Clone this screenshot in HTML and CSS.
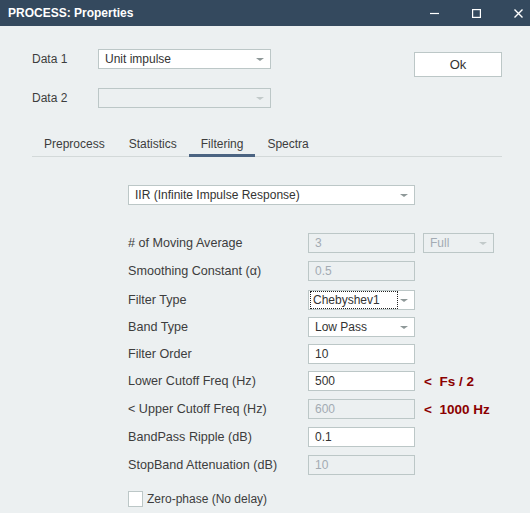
FILE: index.html
```html
<!DOCTYPE html>
<html>
<head>
<meta charset="utf-8">
<link rel="stylesheet" href="styles.css">
</head>
<body>
<div class="window">
  <div class="titlebar">
    <div class="title">PROCESS: Properties</div>
    <div class="controls">
      <svg class="ctl" width="9" height="9" viewBox="0 0 9 9"><path d="M0 4.5h9" stroke="#fff" stroke-width="1.2"/></svg>
      <svg class="ctl" width="9" height="9" viewBox="0 0 9 9"><rect x="0.6" y="0.6" width="7.8" height="7.8" fill="none" stroke="#fff" stroke-width="1.2"/></svg>
      <svg class="ctl" width="9" height="9" viewBox="0 0 9 9"><path d="M0.5 0.5l8 8M8.5 0.5l-8 8" stroke="#fff" stroke-width="1.4"/></svg>
    </div>
  </div>

  <div class="content">
    <div class="top">
      <div class="data">
        <div class="data-row">
          <span class="data-label">Data 1</span>
          <div class="box select data-select"><span class="val">Unit impulse</span><span class="arrow"></span></div>
        </div>
        <div class="data-row second">
          <span class="data-label">Data 2</span>
          <div class="box select data-select disabled"><span class="val"></span><span class="arrow"></span></div>
        </div>
      </div>
      <button class="ok">Ok</button>
    </div>

    <div class="tabs">
      <span class="tab">Preprocess</span>
      <span class="tab">Statistics</span>
      <span class="tab active">Filtering</span>
      <span class="tab">Spectra</span>
    </div>

    <div class="filter">
      <div class="box select iir"><span class="val">IIR (Infinite Impulse Response)</span><span class="arrow"></span></div>

      <div class="rows">
        <div class="row first">
          <span class="label">#&nbsp;of Moving Average</span>
          <div class="box input disabled">3</div>
          <div class="box select full disabled"><span class="val">Full</span><span class="arrow"></span></div>
        </div>
        <div class="row">
          <span class="label">Smoothing Constant (α)</span>
          <div class="box input disabled">0.5</div>
        </div>
        <div class="row g9">
          <span class="label">Filter Type</span>
          <div class="box select input"><span class="val focus">Chebyshev1</span><span class="arrow"></span></div>
        </div>
        <div class="row g7">
          <span class="label">Band Type</span>
          <div class="box select input"><span class="val">Low Pass</span><span class="arrow"></span></div>
        </div>
        <div class="row g7">
          <span class="label">Filter Order</span>
          <div class="box input">10</div>
        </div>
        <div class="row g7">
          <span class="label">Lower Cutoff Freq (Hz)</span>
          <div class="box input">500</div>
          <span class="hint">&lt;&nbsp; Fs / 2</span>
        </div>
        <div class="row">
          <span class="label">&lt; Upper Cutoff Freq (Hz)</span>
          <div class="box input disabled">600</div>
          <span class="hint">&lt;&nbsp; 1000 Hz</span>
        </div>
        <div class="row">
          <span class="label">BandPass Ripple (dB)</span>
          <div class="box input">0.1</div>
        </div>
        <div class="row">
          <span class="label">StopBand Attenuation (dB)</span>
          <div class="box input disabled">10</div>
        </div>
      </div>

      <div class="check">
        <span class="checkbox"></span>
        <span class="check-label">Zero-phase (No delay)</span>
      </div>
    </div>
  </div>
</div>
</body>
</html>
```

FILE: styles.css
```css
* { box-sizing: border-box; }
html, body {
  margin: 0;
  padding: 0;
  width: 530px;
  height: 513px;
  overflow: hidden;
  background: #ecf0f1;
  font-family: "Liberation Sans", Arial, sans-serif;
  font-size: 12px;
  color: #3d3d3d;
}
.window { width: 530px; height: 513px; }

.titlebar {
  height: 26px;
  background: #34495e;
  display: flex;
  align-items: center;
  justify-content: space-between;
  padding-left: 8px;
}
.title {
  color: #fff;
  font-weight: bold;
  font-size: 12px;
}
.controls {
  display: flex;
  align-items: center;
  gap: 33px;
  padding-right: 7px;
}
.ctl { display: block; }

.content { padding: 0 28px 0 32px; }

.top {
  display: flex;
  justify-content: space-between;
  align-items: flex-start;
}
.data { padding-top: 23px; }
.data-row { display: flex; align-items: center; height: 20px; }
.data-row.second { margin-top: 19px; }
.data-label { width: 66px; }

.box {
  height: 20px;
  border: 1px solid #bcc7c7;
  background: #fff;
  display: flex;
  align-items: center;
  padding-left: 6px;
  color: #333;
  position: relative;
}
.box.disabled { background: #ecf0f1; color: #a3abb3; }
.select { padding-right: 18px; }
.select .val { flex: 1; white-space: nowrap; }
.arrow {
  position: absolute;
  right: 6px;
  top: 8px;
  width: 0; height: 0;
  border-left: 4px solid transparent;
  border-right: 4px solid transparent;
  border-top: 3px solid #8e9898;
}
.disabled .arrow { border-top-color: #c2caca; }
.data-select { width: 173px; }

.ok {
  margin-top: 26px;
  width: 88px;
  height: 25px;
  background: #fff;
  border: 1px solid #bcc7c7;
  font-family: inherit;
  font-size: 13px;
  color: #333;
  padding: 0;
}

.tabs {
  margin-top: 23px;
  display: flex;
  align-items: flex-end;
  border-bottom: 1px solid #d3d9d9;
}
.tab {
  padding: 3px 12px 0;
  line-height: 20px;
  border-bottom: 3px solid transparent;
  margin-bottom: -1px;
  color: #3d3d3d;
}
.tab.active { border-bottom-color: #4b6482; }

.filter { padding-left: 96px; }
.iir { margin-top: 28px; width: 287px; }

.rows { margin-top: 28px; }
.row { display: flex; align-items: center; height: 20px; margin-top: 8px; }
.row.first { margin-top: 0; }
.row.g9 { margin-top: 9px; }
.row.g7 { margin-top: 7px; }
.label { width: 180px; white-space: nowrap; font-size: 12.6px; }
.input { width: 107px; }
.full { width: 71px; margin-left: 8px; }
.focus {
  flex: 0 0 auto !important;
  outline: 1px dotted #222;
  outline-offset: 0;
  padding: 0 2px;
  margin-left: -4px;
  line-height: 16px;
  width: 86px;
}
.hint {
  margin-left: 9px;
  color: #8b0000;
  font-weight: bold;
  font-size: 13.5px;
  white-space: pre;
}

.check {
  margin-top: 16px;
  display: flex;
  align-items: center;
}
.checkbox {
  width: 15px;
  height: 16px;
  background: #fff;
  border: 1px solid #bcc7c7;
  margin-right: 4px;
}
```
